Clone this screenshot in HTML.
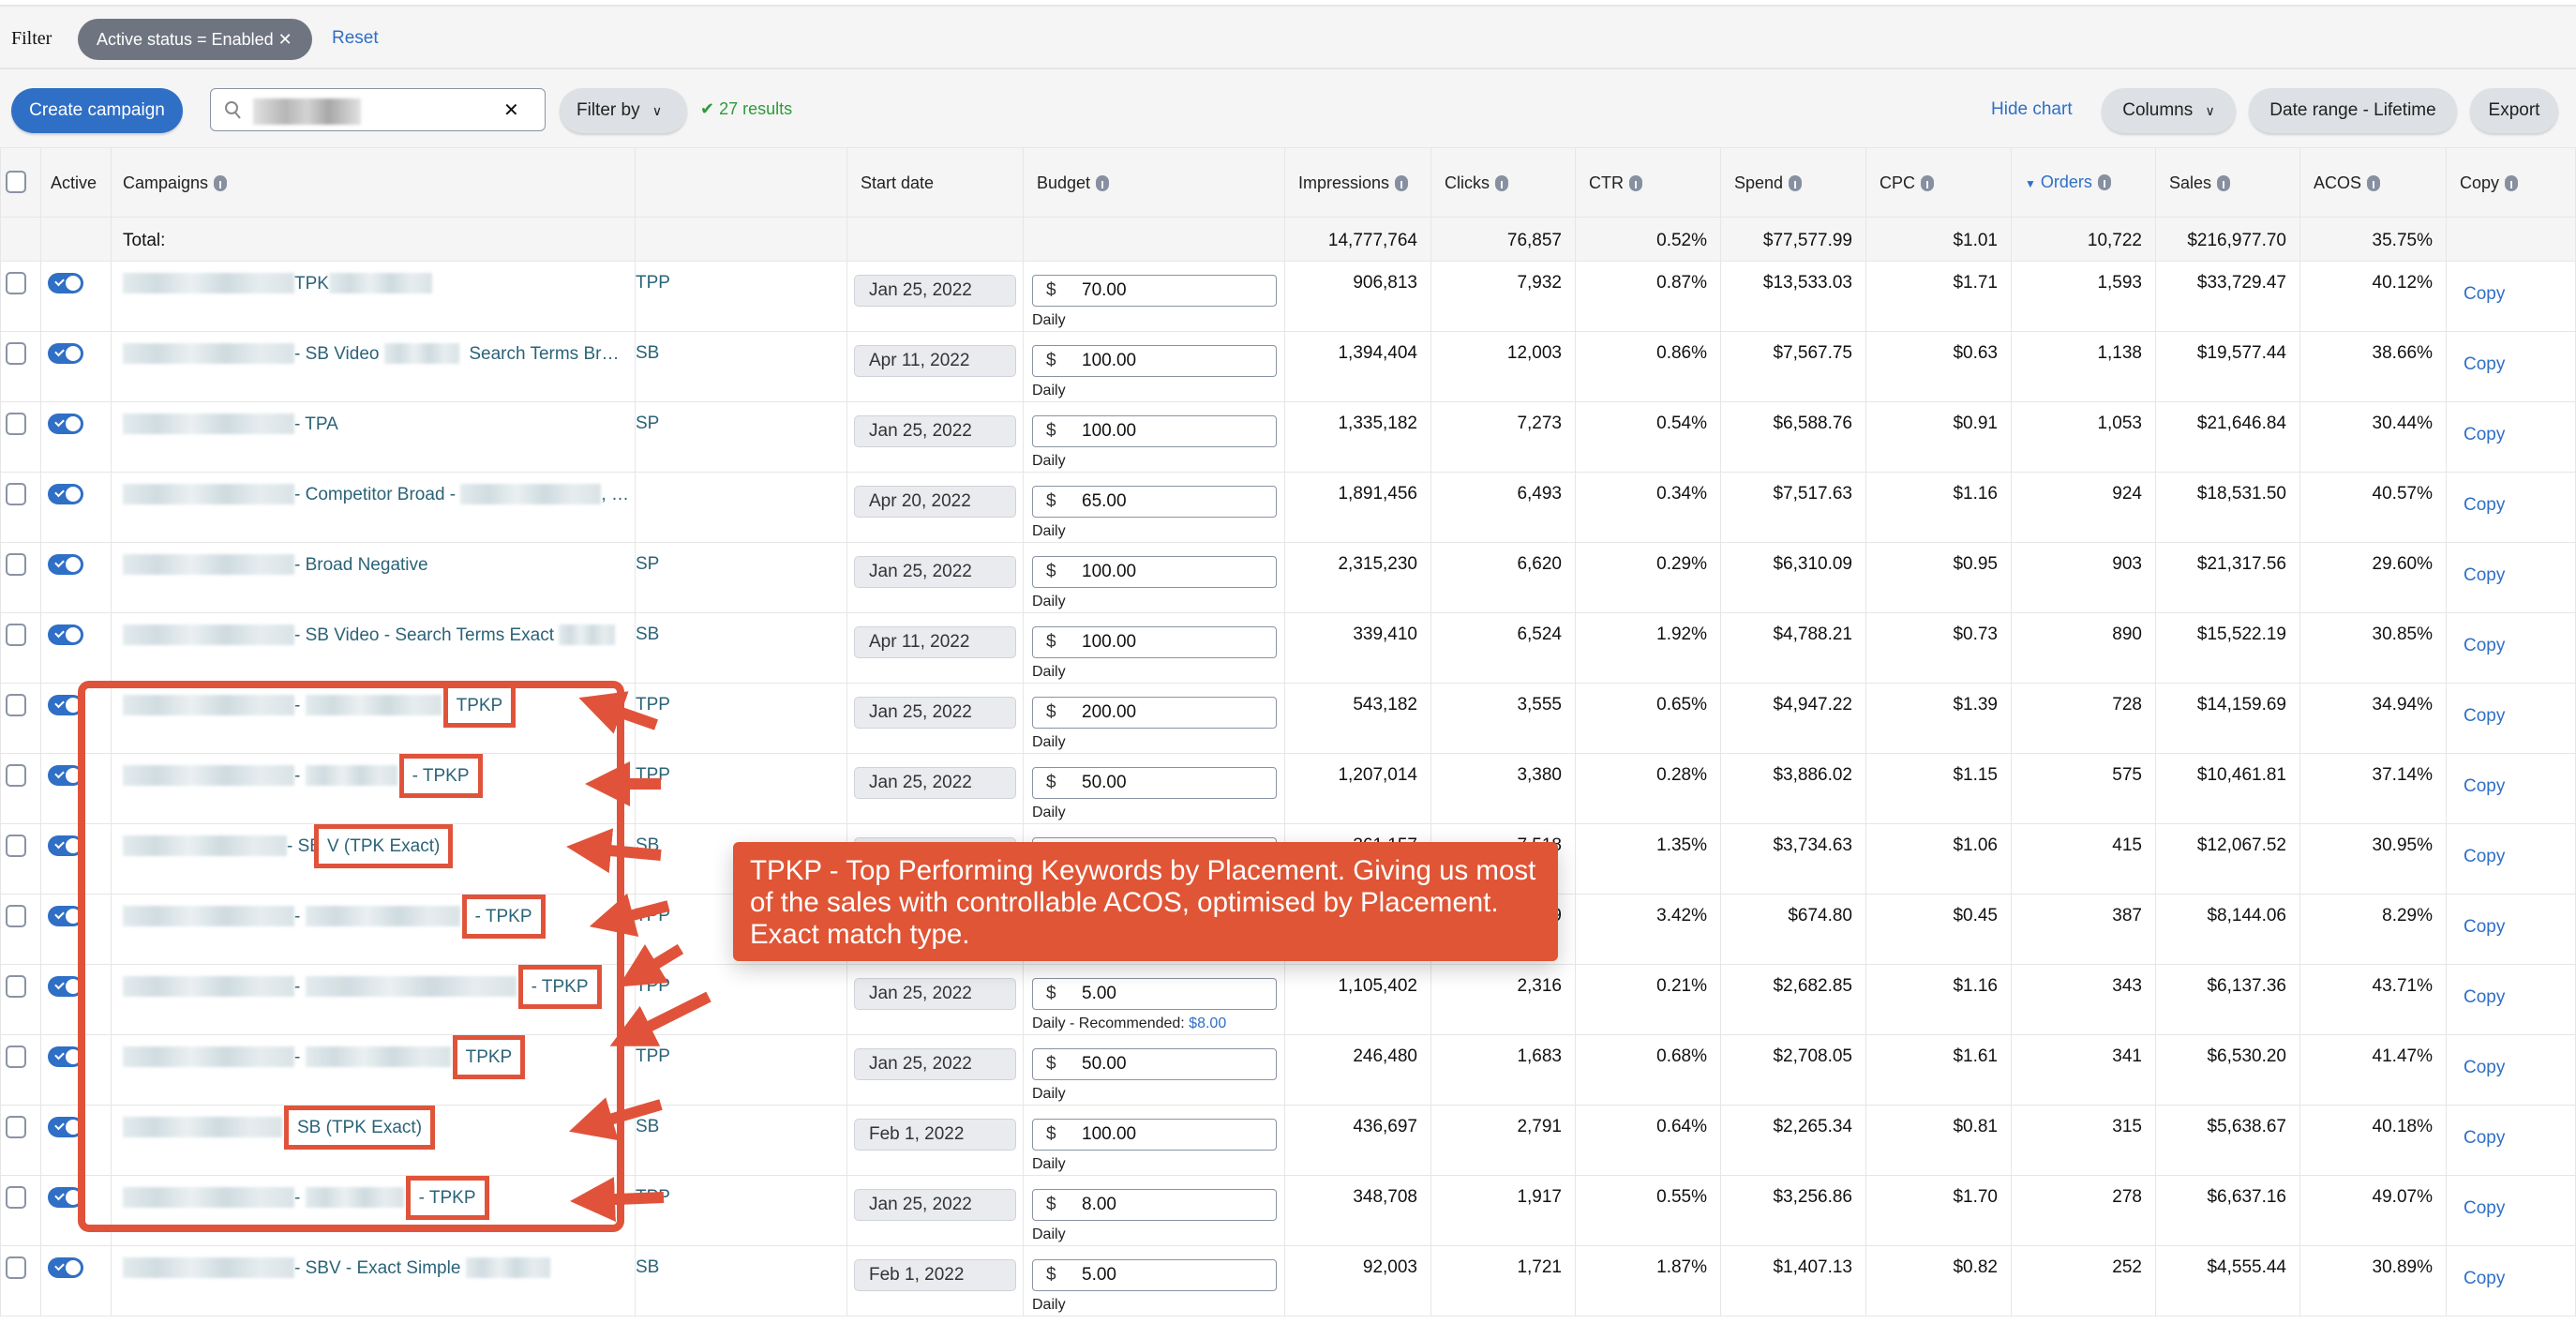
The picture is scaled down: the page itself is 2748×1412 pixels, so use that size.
<!DOCTYPE html>
<html><head><meta charset="utf-8"><style>
*{box-sizing:border-box;margin:0;padding:0}
body{width:2748px;height:1412px;overflow:hidden;background:#fff;font-family:"Liberation Sans",sans-serif;font-size:19px;color:#111;position:relative}
.top{position:absolute;left:0;top:5px;width:2748px;height:152px;background:#f5f5f5;border-top:2px solid #e6e6e6}
.sep{position:absolute;left:0;top:72px;width:2748px;height:2px;background:#e4e4e4}
.abs{position:absolute}
.chip{left:83px;top:20px;width:250px;height:44px;border-radius:22px;background:#6f7580;color:#fff;line-height:44px;padding-left:20px;font-size:18px}
.btn{top:94px;height:48px;border-radius:24px;background:#dde0e4;box-shadow:0 2px 2px rgba(0,0,0,.15);line-height:48px;text-align:center;color:#222;font-size:19px}
table{position:absolute;left:0;top:157px;border-collapse:collapse;table-layout:fixed;width:2748px}
td{border:1px solid #e6e6e6;vertical-align:top;padding:12px 14px 0 14px;height:74.7px;white-space:nowrap;overflow:hidden;line-height:22px}
tr.h td{height:74px;background:#f5f5f5;vertical-align:middle;padding-top:0;font-size:18px;color:#222}
tr.t td{height:47px;background:#f5f5f5;padding-top:14px}
td.n{text-align:right;padding-right:14px}
i.in{display:inline-block;width:14px;height:17px;border-radius:7px;background:#8790a0;vertical-align:-3px;margin-left:6px;position:relative}
i.in:after{content:"";position:absolute;left:6px;top:6px;width:2px;height:8px;background:#f5f5f5}
i.cb{display:block;width:22px;height:24px;border:2px solid #8a93a3;border-radius:5px;margin:-1px 0 0 -9px;background:#fff}
i.tg{display:block;width:38px;height:22px;border-radius:11px;background:#2f6fc6;margin:0 0 0 -7px;position:relative}
i.tg:after{content:"";position:absolute;right:3px;top:3px;width:16px;height:16px;border-radius:8px;background:#fff}
i.tg:before{content:"";position:absolute;left:8px;top:6px;width:7px;height:4px;border-left:2px solid #fff;border-bottom:2px solid #fff;transform:rotate(-45deg)}
.cp{color:#2b6378;padding-left:12px}
.ty{color:#2b6378;padding-left:0}
b.bl{display:inline-block;height:22px;vertical-align:-5px;background:linear-gradient(90deg,#dfe8eb,#c9d7dc 20%,#e8eef0 40%,#c6d5da 60%,#e3eaed 80%,#d3dee2);filter:blur(1.5px);opacity:.85}
.hb{border:5px solid #e0533a;padding:8px 9px;background:#fff;margin:0 2px}
.dt{width:173px;height:34px;margin:2px 0 0 -7px;background:#e9ebee;border:1px solid #cfd3d9;border-radius:5px;line-height:32px;padding-left:15px;color:#333;font-size:19px}
.bg{width:261px;height:34px;margin:2px 0 0 -5px;border:1px solid #8a93a3;border-radius:4px;line-height:32px;padding-left:14px;font-size:19px}
.bg span{display:inline-block;width:38px;color:#333}
.dl{font-size:16px;margin:4px 0 0 -5px;color:#222}
.dl a{color:#2f6fc6}
.cpy{color:#2f6fc6;display:block;padding-top:12px;padding-left:4px}
</style></head><body>
<div class="top"></div>
<div class="sep"></div>
<div class="abs" style="left:12px;top:30px;font-family:'Liberation Serif',serif;font-size:20px">Filter</div>
<div class="abs chip">Active status = Enabled ✕</div>
<div class="abs" style="left:354px;top:30px;color:#2f6fc6;font-size:19px">Reset</div>
<div class="abs btn" style="left:12px;width:183px;background:#2f6fc6;color:#fff">Create campaign</div>
<div class="abs" style="left:224px;top:94px;width:358px;height:46px;background:#fff;border:1px solid #8a93a3;border-radius:6px">
 <svg class="abs" style="left:14px;top:12px" width="20" height="22"><circle cx="8" cy="8" r="6" fill="none" stroke="#888" stroke-width="2"/><line x1="12" y1="13" x2="17" y2="19" stroke="#888" stroke-width="2"/></svg>
 <b class="bl abs" style="left:45px;top:10px;width:115px;height:28px;background:linear-gradient(90deg,#ddd,#aaa 30%,#ccc 50%,#999 70%,#ddd)"></b>
 <div class="abs" style="left:312px;top:10px;font-size:20px">✕</div>
</div>
<div class="abs btn" style="left:597px;width:136px;text-align:left;padding-left:18px">Filter by <span style="font-size:14px;margin-left:8px">∨</span></div>
<div class="abs" style="left:747px;top:106px;color:#2e9a3a;font-size:18px">✔ 27 results</div>
<div class="abs" style="left:2124px;top:106px;color:#2f6fc6;font-size:19px">Hide chart</div>
<div class="abs btn" style="left:2242px;width:143px">Columns <span style="font-size:14px;margin-left:8px">∨</span></div>
<div class="abs btn" style="left:2399px;width:222px">Date range - Lifetime</div>
<div class="abs btn" style="left:2635px;width:94px">Export</div>

<table>
<tr class="h"><td style="width:43px"><i class="cb"></i></td><td style="width:75px;padding-left:10px">Active</td><td style="width:559px;padding-left:12px">Campaigns<i class="in"></i></td><td style="width:226px"></td><td style="width:188px">Start date</td><td style="width:279px">Budget<i class="in"></i></td><td style="width:156px">Impressions<i class="in"></i></td><td style="width:154px">Clicks<i class="in"></i></td><td style="width:155px">CTR<i class="in"></i></td><td style="width:155px">Spend<i class="in"></i></td><td style="width:155px">CPC<i class="in"></i></td><td style="width:154px;color:#2f6fc6"><span style="font-size:12px">▼</span> Orders<i class="in"></i></td><td style="width:154px">Sales<i class="in"></i></td><td style="width:156px">ACOS<i class="in"></i></td><td>Copy<i class="in"></i></td></tr>
<tr class="t"><td></td><td></td><td style="padding-left:12px">Total:</td><td></td><td></td><td></td><td class="n">14,777,764</td><td class="n">76,857</td><td class="n">0.52%</td><td class="n">$77,577.99</td><td class="n">$1.01</td><td class="n">10,722</td><td class="n">$216,977.70</td><td class="n">35.75%</td><td></td></tr>

<tr><td><i class="cb"></i></td><td><i class="tg"></i></td><td class="cp"><b class="bl" style="width:183px"></b>TPK<b class="bl" style="width:110px"></b></td><td class="ty">TPP</td><td><div class="dt">Jan 25, 2022</div></td><td><div class="bg"><span>$</span>70.00</div><div class="dl">Daily</div></td><td class="n">906,813</td><td class="n">7,932</td><td class="n">0.87%</td><td class="n">$13,533.03</td><td class="n">$1.71</td><td class="n">1,593</td><td class="n">$33,729.47</td><td class="n">40.12%</td><td><a class="cpy">Copy</a></td></tr>
<tr><td><i class="cb"></i></td><td><i class="tg"></i></td><td class="cp"><b class="bl" style="width:183px"></b>- SB Video <b class="bl" style="width:80px"></b>&nbsp; Search Terms Br…</td><td class="ty">SB</td><td><div class="dt">Apr 11, 2022</div></td><td><div class="bg"><span>$</span>100.00</div><div class="dl">Daily</div></td><td class="n">1,394,404</td><td class="n">12,003</td><td class="n">0.86%</td><td class="n">$7,567.75</td><td class="n">$0.63</td><td class="n">1,138</td><td class="n">$19,577.44</td><td class="n">38.66%</td><td><a class="cpy">Copy</a></td></tr>
<tr><td><i class="cb"></i></td><td><i class="tg"></i></td><td class="cp"><b class="bl" style="width:183px"></b>- TPA</td><td class="ty">SP</td><td><div class="dt">Jan 25, 2022</div></td><td><div class="bg"><span>$</span>100.00</div><div class="dl">Daily</div></td><td class="n">1,335,182</td><td class="n">7,273</td><td class="n">0.54%</td><td class="n">$6,588.76</td><td class="n">$0.91</td><td class="n">1,053</td><td class="n">$21,646.84</td><td class="n">30.44%</td><td><a class="cpy">Copy</a></td></tr>
<tr><td><i class="cb"></i></td><td><i class="tg"></i></td><td class="cp"><b class="bl" style="width:183px"></b>- Competitor Broad - <b class="bl" style="width:150px"></b>, …</td><td class="ty"></td><td><div class="dt">Apr 20, 2022</div></td><td><div class="bg"><span>$</span>65.00</div><div class="dl">Daily</div></td><td class="n">1,891,456</td><td class="n">6,493</td><td class="n">0.34%</td><td class="n">$7,517.63</td><td class="n">$1.16</td><td class="n">924</td><td class="n">$18,531.50</td><td class="n">40.57%</td><td><a class="cpy">Copy</a></td></tr>
<tr><td><i class="cb"></i></td><td><i class="tg"></i></td><td class="cp"><b class="bl" style="width:183px"></b>- Broad Negative</td><td class="ty">SP</td><td><div class="dt">Jan 25, 2022</div></td><td><div class="bg"><span>$</span>100.00</div><div class="dl">Daily</div></td><td class="n">2,315,230</td><td class="n">6,620</td><td class="n">0.29%</td><td class="n">$6,310.09</td><td class="n">$0.95</td><td class="n">903</td><td class="n">$21,317.56</td><td class="n">29.60%</td><td><a class="cpy">Copy</a></td></tr>
<tr><td><i class="cb"></i></td><td><i class="tg"></i></td><td class="cp"><b class="bl" style="width:183px"></b>- SB Video - Search Terms Exact <b class="bl" style="width:60px"></b></td><td class="ty">SB</td><td><div class="dt">Apr 11, 2022</div></td><td><div class="bg"><span>$</span>100.00</div><div class="dl">Daily</div></td><td class="n">339,410</td><td class="n">6,524</td><td class="n">1.92%</td><td class="n">$4,788.21</td><td class="n">$0.73</td><td class="n">890</td><td class="n">$15,522.19</td><td class="n">30.85%</td><td><a class="cpy">Copy</a></td></tr>
<tr><td><i class="cb"></i></td><td><i class="tg"></i></td><td class="cp"><b class="bl" style="width:183px"></b>- <b class="bl" style="width:145px"></b><span class="hb">TPKP</span></td><td class="ty">TPP</td><td><div class="dt">Jan 25, 2022</div></td><td><div class="bg"><span>$</span>200.00</div><div class="dl">Daily</div></td><td class="n">543,182</td><td class="n">3,555</td><td class="n">0.65%</td><td class="n">$4,947.22</td><td class="n">$1.39</td><td class="n">728</td><td class="n">$14,159.69</td><td class="n">34.94%</td><td><a class="cpy">Copy</a></td></tr>
<tr><td><i class="cb"></i></td><td><i class="tg"></i></td><td class="cp"><b class="bl" style="width:183px"></b>- <b class="bl" style="width:98px"></b><span class="hb">- TPKP</span></td><td class="ty">TPP</td><td><div class="dt">Jan 25, 2022</div></td><td><div class="bg"><span>$</span>50.00</div><div class="dl">Daily</div></td><td class="n">1,207,014</td><td class="n">3,380</td><td class="n">0.28%</td><td class="n">$3,886.02</td><td class="n">$1.15</td><td class="n">575</td><td class="n">$10,461.81</td><td class="n">37.14%</td><td><a class="cpy">Copy</a></td></tr>
<tr><td><i class="cb"></i></td><td><i class="tg"></i></td><td class="cp"><b class="bl" style="width:175px"></b>- SB<span class="hb" style="margin-left:-8px">V (TPK Exact)</span></td><td class="ty">SB</td><td><div class="dt">Jan 25, 2022</div></td><td><div class="bg"><span>$</span>20.00</div><div class="dl">Daily</div></td><td class="n">361,157</td><td class="n">7,518</td><td class="n">1.35%</td><td class="n">$3,734.63</td><td class="n">$1.06</td><td class="n">415</td><td class="n">$12,067.52</td><td class="n">30.95%</td><td><a class="cpy">Copy</a></td></tr>
<tr><td><i class="cb"></i></td><td><i class="tg"></i></td><td class="cp"><b class="bl" style="width:183px"></b>- <b class="bl" style="width:165px"></b><span class="hb">- TPKP</span></td><td class="ty">TPP</td><td><div class="dt">Jan 25, 2022</div></td><td><div class="bg"><span>$</span>10.00</div><div class="dl">Daily</div></td><td class="n">1,066,119</td><td class="n">5,889</td><td class="n">3.42%</td><td class="n">$674.80</td><td class="n">$0.45</td><td class="n">387</td><td class="n">$8,144.06</td><td class="n">8.29%</td><td><a class="cpy">Copy</a></td></tr>
<tr><td><i class="cb"></i></td><td><i class="tg"></i></td><td class="cp"><b class="bl" style="width:183px"></b>- <b class="bl" style="width:225px"></b><span class="hb">- TPKP</span></td><td class="ty">TPP</td><td><div class="dt">Jan 25, 2022</div></td><td><div class="bg"><span>$</span>5.00</div><div class="dl">Daily - Recommended: <a>$8.00</a></div></td><td class="n">1,105,402</td><td class="n">2,316</td><td class="n">0.21%</td><td class="n">$2,682.85</td><td class="n">$1.16</td><td class="n">343</td><td class="n">$6,137.36</td><td class="n">43.71%</td><td><a class="cpy">Copy</a></td></tr>
<tr><td><i class="cb"></i></td><td><i class="tg"></i></td><td class="cp"><b class="bl" style="width:183px"></b>- <b class="bl" style="width:155px"></b><span class="hb">TPKP</span></td><td class="ty">TPP</td><td><div class="dt">Jan 25, 2022</div></td><td><div class="bg"><span>$</span>50.00</div><div class="dl">Daily</div></td><td class="n">246,480</td><td class="n">1,683</td><td class="n">0.68%</td><td class="n">$2,708.05</td><td class="n">$1.61</td><td class="n">341</td><td class="n">$6,530.20</td><td class="n">41.47%</td><td><a class="cpy">Copy</a></td></tr>
<tr><td><i class="cb"></i></td><td><i class="tg"></i></td><td class="cp"><b class="bl" style="width:170px"></b><span class="hb">SB (TPK Exact)</span></td><td class="ty">SB</td><td><div class="dt">Feb 1, 2022</div></td><td><div class="bg"><span>$</span>100.00</div><div class="dl">Daily</div></td><td class="n">436,697</td><td class="n">2,791</td><td class="n">0.64%</td><td class="n">$2,265.34</td><td class="n">$0.81</td><td class="n">315</td><td class="n">$5,638.67</td><td class="n">40.18%</td><td><a class="cpy">Copy</a></td></tr>
<tr><td><i class="cb"></i></td><td><i class="tg"></i></td><td class="cp"><b class="bl" style="width:183px"></b>- <b class="bl" style="width:105px"></b><span class="hb">- TPKP</span></td><td class="ty">TPP</td><td><div class="dt">Jan 25, 2022</div></td><td><div class="bg"><span>$</span>8.00</div><div class="dl">Daily</div></td><td class="n">348,708</td><td class="n">1,917</td><td class="n">0.55%</td><td class="n">$3,256.86</td><td class="n">$1.70</td><td class="n">278</td><td class="n">$6,637.16</td><td class="n">49.07%</td><td><a class="cpy">Copy</a></td></tr>
<tr><td><i class="cb"></i></td><td><i class="tg"></i></td><td class="cp"><b class="bl" style="width:183px"></b>- SBV - Exact Simple <b class="bl" style="width:90px"></b></td><td class="ty">SB</td><td><div class="dt">Feb 1, 2022</div></td><td><div class="bg"><span>$</span>5.00</div><div class="dl">Daily</div></td><td class="n">92,003</td><td class="n">1,721</td><td class="n">1.87%</td><td class="n">$1,407.13</td><td class="n">$0.82</td><td class="n">252</td><td class="n">$4,555.44</td><td class="n">30.89%</td><td><a class="cpy">Copy</a></td></tr>
</table>

<svg class="abs" style="left:0;top:0" width="2748" height="1412">
<defs><marker id="ah" markerWidth="4" markerHeight="4" refX="2" refY="2" orient="auto" markerUnits="strokeWidth"><path d="M0,0 L4,2 L0,4 Z" fill="#e0533a"/></marker></defs>
<rect x="87" y="730" width="575" height="580" rx="8" fill="none" stroke="#e0533a" stroke-width="8"/>
<g stroke="#e0533a" stroke-width="12" fill="none" marker-end="url(#ah)">
<line x1="700" y1="773" x2="640" y2="752"/>
<line x1="705" y1="836" x2="648" y2="836"/>
<line x1="705" y1="912" x2="628" y2="905"/>
<line x1="713" y1="966" x2="652" y2="982"/>
<line x1="726" y1="1012" x2="680" y2="1040"/>
<line x1="756" y1="1063" x2="672" y2="1105"/>
<line x1="705" y1="1178" x2="630" y2="1200"/>
<line x1="708" y1="1277" x2="632" y2="1280"/>
</g>
</svg>
<div class="abs" style="left:782px;top:898px;width:880px;height:127px;background:#e05535;border-radius:6px;box-shadow:0 8px 24px rgba(0,0,0,.2);color:#fff;font-size:29.5px;line-height:34px;padding:14px 0 0 18px;white-space:nowrap">TPKP - Top Performing Keywords by Placement. Giving us most<br>of the sales with controllable ACOS, optimised by Placement.<br>Exact match type.</div>
</body></html>
